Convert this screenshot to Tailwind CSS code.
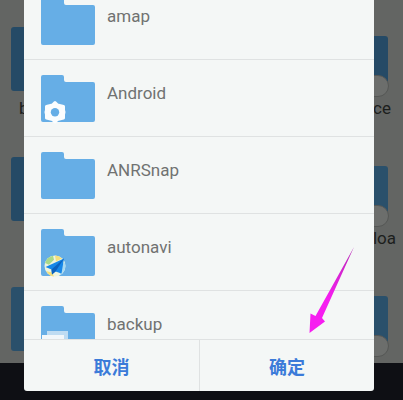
<!DOCTYPE html>
<html lang="zh-CN">
<head>
<meta charset="utf-8">
<meta name="viewport" content="width=device-width, initial-scale=1">
<title>选择文件夹</title>
<script src="https://cdn.jsdelivr.net/npm/@tailwindcss/browser@4"></script>
</head>
<body class="font-[Roboto,'Noto_Sans_CJK_SC',sans-serif]">
<svg class="hidden" aria-hidden="true">
  <symbol id="folder" viewBox="0 0 54 47">
    <path fill="#66aee6" d="M2 0h19q2 0 2 2v3q0 2 2 2h27q2 0 2 2v36q0 2-2 2H2q-2 0-2-2V2q0-2 2-2z"/>
  </symbol>
</svg>
<div class="relative flex h-screen flex-col overflow-hidden bg-[#636563]">
  <!-- dimmed file grid behind the dialog -->
  <div class="flex min-h-0 flex-1 justify-between overflow-hidden pr-[7px] pl-[11px] text-[17px] text-[#1c1e1d]" aria-hidden="true">
    <div class="flex flex-col gap-[66px] pt-[27px]">
      <div class="relative h-16 w-20 shrink-0 rounded-[3px] bg-[#254a66]"><span class="absolute top-[71px] left-2 leading-5">b</span></div>
      <div class="h-16 w-20 shrink-0 rounded-[3px] bg-[#254a66]"></div>
      <div class="h-16 w-20 shrink-0 rounded-[3px] bg-[#2a506b]"></div>
    </div>
    <div class="flex flex-col gap-[78px] pt-9 pr-2">
      <div class="relative h-[52px] w-20 shrink-0 rounded-[3px] bg-[#254a66]">
        <span class="absolute -right-px -bottom-[9px] h-[22px] w-9 rounded-full border border-[#555755] bg-[#6c6e6c]"></span>
        <span class="absolute top-[62px] -right-[3px] leading-5">ce</span>
      </div>
      <div class="relative h-[52px] w-20 shrink-0 rounded-[3px] bg-[#2a506b]">
        <span class="absolute -right-px -bottom-[9px] h-[22px] w-9 rounded-full border border-[#555755] bg-[#6c6e6c]"></span>
        <span class="absolute top-[62px] -right-2 leading-5">loa</span>
      </div>
      <div class="relative h-[52px] w-20 shrink-0 rounded-[3px] bg-[#2a506b]">
        <span class="absolute -right-px -bottom-[9px] h-[22px] w-9 rounded-full border border-[#555755] bg-[#6c6e6c]"></span>
      </div>
    </div>
  </div>
  <div class="h-[37px] shrink-0 bg-[#0e0f14]"></div>

  <section role="dialog" aria-label="选择文件夹" class="absolute top-0 right-[29px] bottom-[9px] left-6 flex flex-col overflow-hidden rounded-b-[3px] bg-[#f4f7f6]">
    <div class="min-h-0 flex-1 overflow-hidden">
      <ul class="-mt-[17px] text-[17px] text-[#707271]">
        <li class="flex h-[77px] items-start gap-3 border-b border-[#dfe2e2] px-[17px] pt-[15px]">
          <svg class="h-[47px] w-[54px] shrink-0"><use href="#folder"/></svg>
          <span class="pt-2 leading-5">amap</span>
        </li>
        <li class="flex h-[77px] items-start gap-3 border-b border-[#dfe2e2] px-[17px] pt-[15px]">
          <svg class="h-[47px] w-[54px] shrink-0 overflow-visible" viewBox="0 0 54 47">
            <use href="#folder" width="54" height="47"/>
            <path fill="#fbfdfe" stroke="#fbfdfe" stroke-width="3" stroke-linejoin="round" d="M14 27.500l2.500 2.500 6 1.500v3.500l.5 2.200-.5 2.300v3.500l-6 1.500L14 47l-2.500-2.500-6-1.500v-3.500l-.5-2.300.5-2.200v-3.500l6-1.500z"/>
            <circle cx="14" cy="37.200" r="4.200" fill="#66aee6"/>
          </svg>
          <span class="pt-2 leading-5">Android</span>
        </li>
        <li class="flex h-[77px] items-start gap-3 border-b border-[#dfe2e2] px-[17px] pt-[15px]">
          <svg class="h-[47px] w-[54px] shrink-0"><use href="#folder"/></svg>
          <span class="pt-2 leading-5">ANRSnap</span>
        </li>
        <li class="flex h-[77px] items-start gap-3 border-b border-[#dfe2e2] px-[17px] pt-[15px]">
          <svg class="h-[47px] w-[54px] shrink-0 overflow-visible" viewBox="0 0 54 47">
            <use href="#folder" width="54" height="47"/>
            <circle cx="14" cy="37" r="10.500" fill="#eef4df"/>
            <path fill="#a9d98a" d="M4 34a10.500 10.500 0 0 1 8-7.300l1 4-5 5z"/>
            <path fill="#f5df7c" d="M14 26.500q4 0 7 3l-6 3zM5 42q3 5 8 5.500l-2-4z"/>
            <path fill="#a8daf3" d="M23.500 33q3 7-4 13l-2-5z"/>
            <path fill="#1687e8" d="M23 29.500L4.500 38l6 2.500.5 5 3.500-3 6 2z"/>
            <path fill="#0b61bd" d="M23 29.500L10.500 40.500l.5 5 3.500-3z"/>
          </svg>
          <span class="pt-2 leading-5">autonavi</span>
        </li>
        <li class="flex h-[77px] items-start gap-3 px-[17px] pt-[15px]">
          <svg class="h-[47px] w-[54px] shrink-0 overflow-visible" viewBox="0 0 54 47">
            <use href="#folder" width="54" height="47"/>
            <path fill="#bfdcf2" d="M6 25h21v18H6z"/>
            <path fill="#f2f7fa" d="M1 29h22v18H1z"/>
          </svg>
          <span class="pt-2 leading-5">backup</span>
        </li>
      </ul>
    </div>
    <div class="grid h-[52px] shrink-0 grid-cols-2 border-t border-[#dfe2e2] text-lg font-bold text-[#3b7bd9]">
      <button type="button" class="pt-1">取消</button>
      <button type="button" class="border-l border-[#dfe2e2] pt-1">确定</button>
    </div>
  </section>

  <svg class="absolute right-12 bottom-[66px] h-[88px] w-[46px]" viewBox="0 0 46 88" aria-hidden="true">
    <defs><linearGradient id="ink" x1="0" y1="1" x2="0" y2="0"><stop offset=".4" stop-color="#f61df0"/><stop offset="1" stop-color="#b52cb4"/></linearGradient></defs>
    <path fill="url(#ink)" d="M.500 87L1.500 67.500l5 2.500L45 1 13 72l3 3.500z"/>
  </svg>
</div>
</body>
</html>
